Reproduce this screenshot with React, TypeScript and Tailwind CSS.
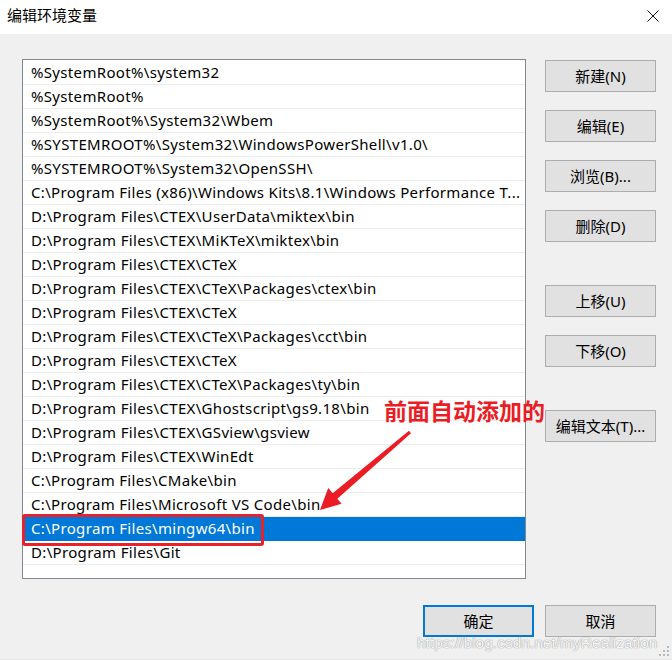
import React from "react";

const items = [
  "%SystemRoot%\\system32",
  "%SystemRoot%",
  "%SystemRoot%\\System32\\Wbem",
  "%SYSTEMROOT%\\System32\\WindowsPowerShell\\v1.0\\",
  "%SYSTEMROOT%\\System32\\OpenSSH\\",
  "C:\\Program Files (x86)\\Windows Kits\\8.1\\Windows Performance T...",
  "D:\\Program Files\\CTEX\\UserData\\miktex\\bin",
  "D:\\Program Files\\CTEX\\MiKTeX\\miktex\\bin",
  "D:\\Program Files\\CTEX\\CTeX",
  "D:\\Program Files\\CTEX\\CTeX\\Packages\\ctex\\bin",
  "D:\\Program Files\\CTEX\\CTeX",
  "D:\\Program Files\\CTEX\\CTeX\\Packages\\cct\\bin",
  "D:\\Program Files\\CTEX\\CTeX",
  "D:\\Program Files\\CTEX\\CTeX\\Packages\\ty\\bin",
  "D:\\Program Files\\CTEX\\Ghostscript\\gs9.18\\bin",
  "D:\\Program Files\\CTEX\\GSview\\gsview",
  "D:\\Program Files\\CTEX\\WinEdt",
  "C:\\Program Files\\CMake\\bin",
  "C:\\Program Files\\Microsoft VS Code\\bin",
  "C:\\Program Files\\mingw64\\bin",
  "D:\\Program Files\\Git",
];

const SELECTED = 19;

function Btn({ label, className = "" }: { label: string; className?: string }) {
  return (
    <div
      className={
        "w-[111px] h-[32px] flex items-center justify-center bg-[#e1e1e1] border border-[#adadad] text-[15px] text-black " +
        className
      }
    >
      {label}
    </div>
  );
}

export default function App() {
  return (
    <div
      className="relative w-[672px] h-[660px] bg-[#f0f0f0] overflow-hidden flex flex-col border-b border-[#e3e3e3]"
      style={{ fontFamily: '"Noto Sans", "Noto Sans CJK SC", sans-serif' }}
    >
      {/* Title bar */}
      <div className="h-[34px] bg-white flex items-center justify-between pl-[7px] pr-[13px] shrink-0">
        <span className="text-[15px] text-black leading-none -mt-[3px]">编辑环境变量</span>
        <svg width="12" height="12" viewBox="0 0 12 12" className="-mt-[3px]">
          <path d="M0.5 0.5 L11.5 11.5 M11.5 0.5 L0.5 11.5" stroke="#111" strokeWidth="1" />
        </svg>
      </div>

      {/* Body */}
      <div className="flex pl-[22px] pt-[25px]">
        <div className="w-[504px] h-[520px] bg-white border border-[#828790] pt-[1px] overflow-hidden shrink-0">
          {items.map((t, i) => (
            <div
              key={i}
              className={
                "h-[24px] flex items-center pl-[8px] pr-[6px] border-b whitespace-nowrap overflow-hidden text-[15px] tracking-[0.33px] " +
                (i === SELECTED
                  ? "bg-[#0078d7] text-white border-[#0078d7]"
                  : "text-black border-[#ececec]")
              }
            >
              <span className="-mt-[1px]">{t}</span>
            </div>
          ))}
        </div>

        <div className="flex flex-col ml-[19px] pt-[1px]">
          <Btn label="新建(N)" />
          <Btn label="编辑(E)" className="mt-[18px]" />
          <Btn label="浏览(B)..." className="mt-[18px]" />
          <Btn label="删除(D)" className="mt-[18px]" />
          <Btn label="上移(U)" className="mt-[43px]" />
          <Btn label="下移(O)" className="mt-[18px]" />
          <Btn label="编辑文本(T)..." className="mt-[43px]" />
        </div>
      </div>

      {/* Bottom buttons */}
      <div className="flex pl-[423px] pt-[26px] gap-[11px]">
        <Btn label="确定" className="!border-2 !border-[#0078d7]" />
        <Btn label="取消" />
      </div>

      {/* Watermark */}
      <div
        className="absolute left-[417px] top-[631px] text-[15.5px] text-white/90 whitespace-nowrap [text-shadow:0_0_1px_#9a9a9a,0_0_1px_#9a9a9a]"
        style={{ fontFamily: '"Liberation Sans", Arial, sans-serif' }}
      >
        https://blog.csdn.net/myRealization
      </div>

      {/* Resize grip */}
      <svg className="absolute right-[2px] bottom-[2px]" width="11" height="11" viewBox="0 0 11 11">
        <rect x="8" y="0" width="2" height="2" fill="#b8b8b8" />
        <rect x="4" y="4" width="2" height="2" fill="#b8b8b8" />
        <rect x="8" y="4" width="2" height="2" fill="#b8b8b8" />
        <rect x="0" y="8" width="2" height="2" fill="#b8b8b8" />
        <rect x="4" y="8" width="2" height="2" fill="#b8b8b8" />
        <rect x="8" y="8" width="2" height="2" fill="#b8b8b8" />
      </svg>

      {/* Annotation: red box */}
      <div className="absolute left-[22px] top-[514px] w-[242px] h-[32px] border-[3px] border-[#e8222a] rounded-[3px] pointer-events-none" />

      {/* Annotation text */}
      <div className="absolute left-[384px] top-[400px] text-[23px] font-bold text-[#ec1c24] leading-none whitespace-nowrap">
        前面自动添加的
      </div>

      {/* Annotation arrow */}
      <svg className="absolute left-0 top-0 pointer-events-none" width="672" height="660" viewBox="0 0 672 660">
        <polygon
          points="409,430.8 411,433.2 337.3,498.7 341.6,503.7 320,510 328.2,487.9 332.7,493.3"
          fill="#ec1c24"
        />
      </svg>
    </div>
  );
}
